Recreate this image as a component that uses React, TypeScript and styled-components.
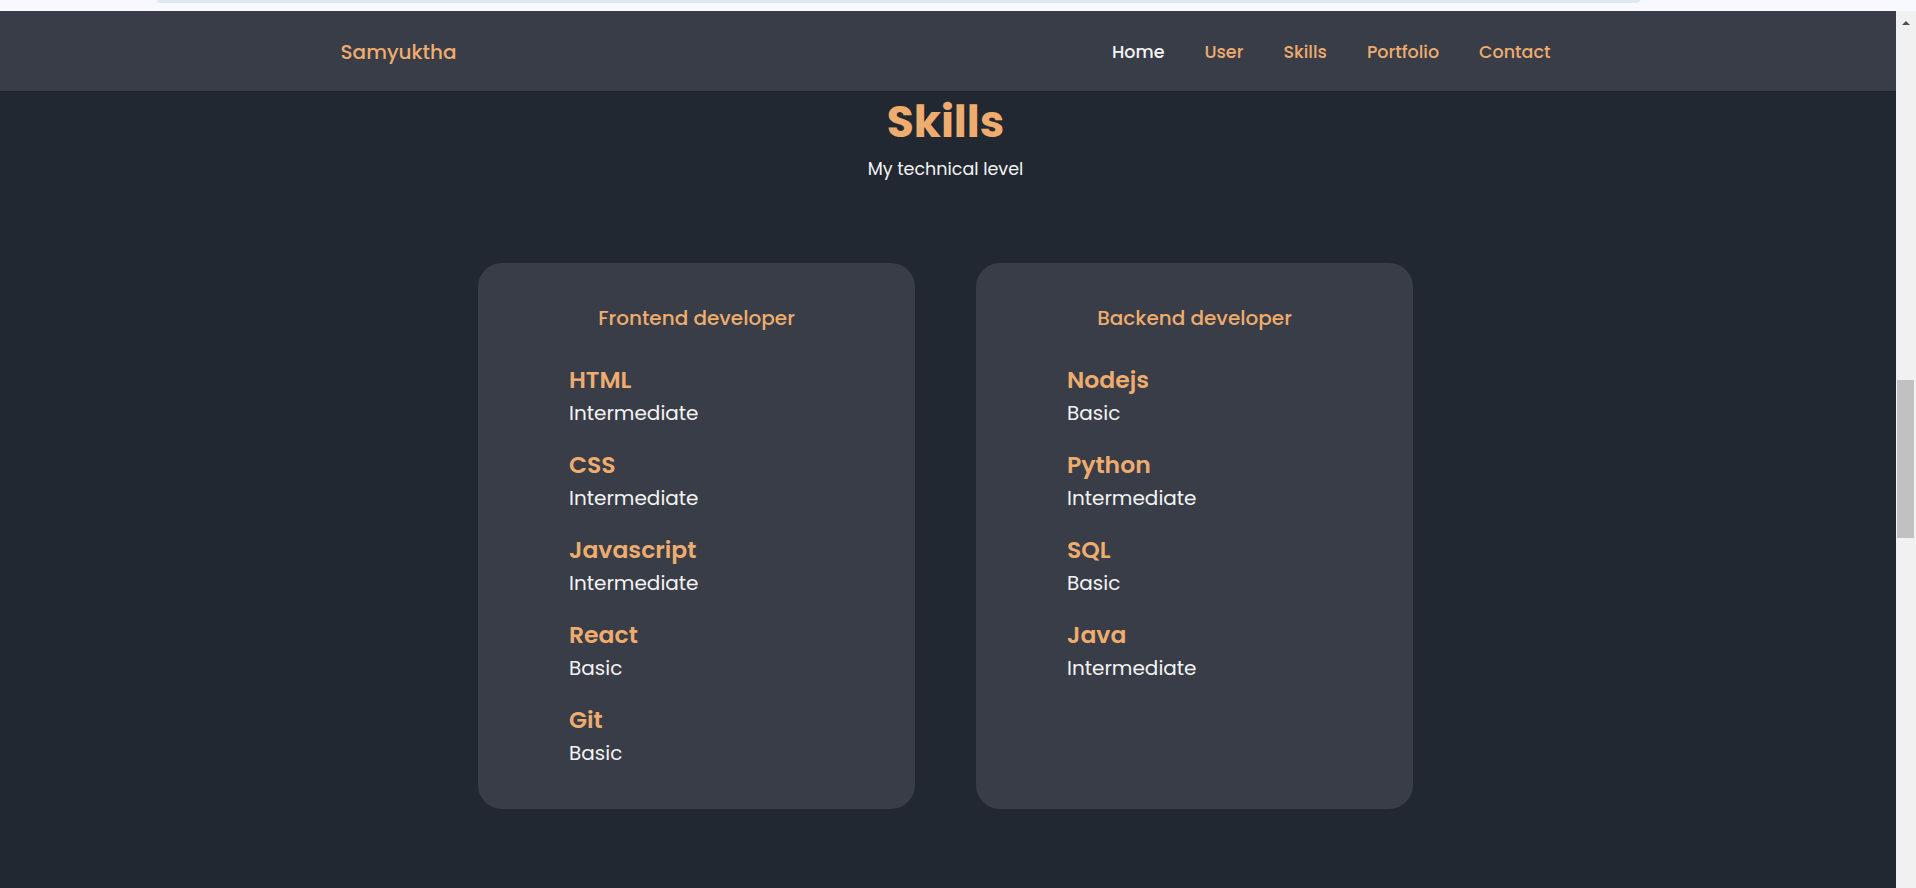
import React from "react";
import styled, { createGlobalStyle } from "styled-components";

const GlobalStyle = createGlobalStyle`
  * { box-sizing: border-box; }
  html, body { margin: 0; padding: 0; height: 100%; overflow: hidden; }
  body { font-family: "Poppins", "Inter", sans-serif; background: #f7f9fe; }
  #root { height: 100%; }
`;

const ORANGE = "#eeac6e";
const WHITE = "#f4f4f4";

const Screen = styled.div`
  display: flex;
  flex-direction: column;
  height: 888px;
  width: 1916px;
`;

const BrowserStrip = styled.div`
  height: 11px;
  flex: none;
  background: #f7f9fe;
  display: flex;
  padding: 0 276px 0 157px;
`;

const StripBar = styled.div`
  flex: 1;
  height: 3px;
  background: #dfe9f3;
  border-radius: 0 0 8px 8px;
`;

const Viewport = styled.div`
  flex: 1;
  display: flex;
  min-height: 0;
`;

const Page = styled.div`
  flex: 1;
  background: #222831;
  display: flex;
  flex-direction: column;
`;

const Header = styled.header`
  height: 80px;
  flex: none;
  background: #393d47;
  padding: 1px 5px 0 0;
`;

const Nav = styled.nav`
  max-width: 1210px;
  height: 100%;
  margin: 0 auto;
  display: flex;
  align-items: center;
  justify-content: space-between;
`;

const Logo = styled.a`
  color: ${ORANGE};
  font-size: 20px;
  font-weight: 500;
  text-decoration: none;
`;

const NavList = styled.ul`
  list-style: none;
  margin: 0;
  padding: 0;
  display: flex;
  column-gap: 40px;
`;

const NavLink = styled.a<{ $active?: boolean }>`
  color: ${(p) => (p.$active ? WHITE : ORANGE)};
  font-size: 17.5px;
  font-weight: 500;
  text-decoration: none;
`;

const Section = styled.section`
  display: flex;
  flex-direction: column;
  align-items: center;
  padding-right: 5px;
`;

const Title = styled.h2`
  margin: 2px 0 0;
  font-size: 44px;
  line-height: 57px;
  font-weight: 700;
  color: ${ORANGE};
`;

const Subtitle = styled.span`
  margin-top: 7px;
  font-size: 17.5px;
  line-height: 24px;
  color: ${WHITE};
`;

const CardGrid = styled.div`
  margin-top: 82px;
  display: grid;
  grid-template-columns: repeat(2, 437px);
  column-gap: 61px;
`;

const Card = styled.div`
  background: #393d47;
  border-radius: 24px;
  padding: 41px 0 38px 91px;
`;

const CardTitle = styled.h3`
  margin: 0 0 32px -91px;
  text-align: center;
  font-size: 20px;
  line-height: 28px;
  font-weight: 500;
  color: ${ORANGE};
`;

const SkillList = styled.div`
  display: flex;
  flex-direction: column;
  row-gap: 18px;
`;

const Skill = styled.div`
  display: flex;
  flex-direction: column;
`;

const SkillName = styled.h4`
  margin: 0;
  font-size: 23.5px;
  line-height: 32px;
  font-weight: 600;
  color: ${ORANGE};
`;

const SkillLevel = styled.span`
  font-size: 20px;
  line-height: 35px;
  color: ${WHITE};
`;

const ScrollTrack = styled.div`
  width: 20px;
  flex: none;
  background: #f1f1f1;
  display: flex;
  flex-direction: column;
  align-items: center;
  padding: 10px 1px 0 0;
`;

const ScrollArrow = styled.div`
  width: 0;
  height: 0;
  border-left: 4px solid transparent;
  border-right: 4px solid transparent;
  border-bottom: 4px solid #505050;
`;

const ScrollThumb = styled.div`
  margin-top: 355px;
  width: 17px;
  height: 158px;
  background: #c1c1c1;
`;

const frontend = [
  ["HTML", "Intermediate"],
  ["CSS", "Intermediate"],
  ["Javascript", "Intermediate"],
  ["React", "Basic"],
  ["Git", "Basic"],
];

const backend = [
  ["Nodejs", "Basic"],
  ["Python", "Intermediate"],
  ["SQL", "Basic"],
  ["Java", "Intermediate"],
];

function SkillCard({ title, items }: { title: string; items: string[][] }) {
  return (
    <Card>
      <CardTitle>{title}</CardTitle>
      <SkillList>
        {items.map(([name, level]) => (
          <Skill key={name}>
            <SkillName>{name}</SkillName>
            <SkillLevel>{level}</SkillLevel>
          </Skill>
        ))}
      </SkillList>
    </Card>
  );
}

export default function App() {
  return (
    <>
      <GlobalStyle />
      <Screen>
        <BrowserStrip>
          <StripBar />
        </BrowserStrip>
        <Viewport>
          <Page>
            <Header>
              <Nav>
                <Logo href="#">Samyuktha</Logo>
                <NavList>
                  <li><NavLink $active href="#">Home</NavLink></li>
                  <li><NavLink href="#">User</NavLink></li>
                  <li><NavLink href="#">Skills</NavLink></li>
                  <li><NavLink href="#">Portfolio</NavLink></li>
                  <li><NavLink href="#">Contact</NavLink></li>
                </NavList>
              </Nav>
            </Header>
            <Section>
              <Title>Skills</Title>
              <Subtitle>My technical level</Subtitle>
              <CardGrid>
                <SkillCard title="Frontend developer" items={frontend} />
                <SkillCard title="Backend developer" items={backend} />
              </CardGrid>
            </Section>
          </Page>
          <ScrollTrack>
            <ScrollArrow />
            <ScrollThumb />
          </ScrollTrack>
        </Viewport>
      </Screen>
    </>
  );
}
